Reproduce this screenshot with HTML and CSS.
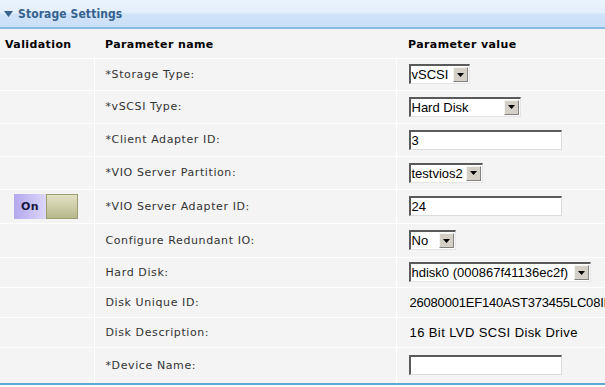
FILE: index.html
```html
<!DOCTYPE html>
<html>
<head>
<meta charset="utf-8">
<link rel="stylesheet" href="styles.css">
</head>
<body>
<div class="panel">
  <div class="panel-head">
    <svg class="caret" width="9" height="6" viewBox="0 0 9 6"><path d="M0 0H9L4.5 6Z" fill="#35628f"/></svg>
    <span class="title">Storage Settings</span>
  </div>
  <table class="grid">
    <thead>
      <tr class="hrow">
        <th class="c-val">Validation</th>
        <th class="c-name">Parameter name</th>
        <th class="c-value">Parameter value</th>
      </tr>
    </thead>
    <tbody>
      <tr class="r32"><td class="c-val"></td><td class="c-name">*Storage Type:</td>
        <td class="c-value"><div class="sel w61"><span class="sel-text">vSCSI</span><span class="sel-btn"><svg width="7" height="4" viewBox="0 0 7 4"><path d="M0 0H7L3.5 4Z" fill="#000"/></svg></span></div></td></tr>
      <tr class="r33"><td class="c-val"></td><td class="c-name">*vSCSI Type:</td>
        <td class="c-value"><div class="sel w112"><span class="sel-text">Hard Disk</span><span class="sel-btn"><svg width="7" height="4" viewBox="0 0 7 4"><path d="M0 0H7L3.5 4Z" fill="#000"/></svg></span></div></td></tr>
      <tr class="r33"><td class="c-val"></td><td class="c-name">*Client Adapter ID:</td>
        <td class="c-value"><div class="inp">3</div></td></tr>
      <tr class="r33"><td class="c-val"></td><td class="c-name">*VIO Server Partition:</td>
        <td class="c-value"><div class="sel w74"><span class="sel-text">testvios2</span><span class="sel-btn"><svg width="7" height="4" viewBox="0 0 7 4"><path d="M0 0H7L3.5 4Z" fill="#000"/></svg></span></div></td></tr>
      <tr class="r34"><td class="c-val"><div class="toggle"><span class="tg-on">On</span><span class="tg-knob"></span></div></td><td class="c-name">*VIO Server Adapter ID:</td>
        <td class="c-value"><div class="inp">24</div></td></tr>
      <tr class="r34"><td class="c-val"></td><td class="c-name">Configure Redundant IO:</td>
        <td class="c-value"><div class="sel w47"><span class="sel-text">No</span><span class="sel-btn"><svg width="7" height="4" viewBox="0 0 7 4"><path d="M0 0H7L3.5 4Z" fill="#000"/></svg></span></div></td></tr>
      <tr class="r30"><td class="c-val"></td><td class="c-name">Hard Disk:</td>
        <td class="c-value"><div class="sel w182"><span class="sel-text">hdisk0 (000867f41136ec2f)</span><span class="sel-btn"><svg width="7" height="4" viewBox="0 0 7 4"><path d="M0 0H7L3.5 4Z" fill="#000"/></svg></span></div></td></tr>
      <tr class="r30"><td class="c-val"></td><td class="c-name">Disk Unique ID:</td>
        <td class="c-value"><span class="plain uid">26080001EF140AST373455LC08II</span></td></tr>
      <tr class="r30"><td class="c-val"></td><td class="c-name">Disk Description:</td>
        <td class="c-value"><span class="plain">16 Bit LVD SCSI Disk Drive</span></td></tr>
      <tr class="r36"><td class="c-val"></td><td class="c-name">*Device Name:</td>
        <td class="c-value"><div class="inp"></div></td></tr>
    </tbody>
  </table>
</div>
</body>
</html>
```
FILE: styles.css
```css
html, body {
  margin: 0;
  padding: 0;
  background: #ffffff;
  overflow: hidden;
}
.panel {
  width: 605px;
  background: #f4f4f4;
}
.panel-head {
  height: 27px;
  display: flex;
  align-items: center;
  gap: 5px;
  padding-left: 4px;
  background: linear-gradient(#eaf3fd 0%, #e4effc 45%, #cfe2f8 55%, #cbe0f8 100%);
  border-bottom: 2px solid #85bbe0;
}
.caret { margin-top: 1px; }
.title {
  font-family: "DejaVu Sans Condensed", "DejaVu Sans", sans-serif;
  font-weight: bold;
  font-size: 12px;
  color: #35628f;
  letter-spacing: 0.1px;
}
.grid {
  width: 605px;
  border-collapse: collapse;
  table-layout: fixed;
  font-family: "DejaVu Sans", sans-serif;
  font-size: 11px;
  color: #333;
  border-bottom: 2px solid #5aaad4;
}
.grid th {
  font-weight: bold;
  color: #000;
  text-align: left;
  height: 29px;
  padding: 0;
  padding-top: 2px;
  box-sizing: border-box;
  vertical-align: middle;
  letter-spacing: 0.4px;
}
.grid td {
  padding: 0;
  border-top: 1px solid #ffffff;
  vertical-align: middle;
  letter-spacing: 0.6px;
}
.c-val { width: 94px; padding-left: 5px !important; box-sizing: border-box; }
.c-name { width: 302px; padding-left: 11px !important; box-sizing: border-box; border-left: 1px solid #fff; }
.c-value { padding-left: 12px !important; box-sizing: border-box; border-left: 1px solid #fff; white-space: nowrap; overflow: hidden; }
.grid th.c-name, .grid th.c-value { border-left: none; }
.r32 td { height: 32px; }
.r33 td { height: 33px; }
.r34 td { height: 34px; }
.r30 td { height: 30px; }
.r36 td { height: 37px; }
.sel {
  display: flex;
  align-items: stretch;
  height: 20px;
  box-sizing: border-box;
  background: #fff;
  border-top: 2px solid #5a5a5a;
  border-left: 2px solid #5a5a5a;
  border-bottom: 1px solid #e4e4e4;
  border-right: 1px solid #e4e4e4;
  font-family: "Liberation Sans", Arial, sans-serif;
  font-size: 13px;
  letter-spacing: 0;
  color: #000;
}
.sel-text { flex: 1; padding-left: 1px; line-height: 17px; white-space: nowrap; overflow: hidden; }
.sel-btn {
  width: 15px;
  margin: 1px;
  background: #d4d0c8;
  border-top: 1px solid #f4f4f0;
  border-left: 1px solid #f4f4f0;
  border-right: 1px solid #808080;
  border-bottom: 1px solid #808080;
  box-sizing: border-box;
  display: flex;
  align-items: center;
  justify-content: center;
}
.w61 { width: 61px; }
.w112 { width: 112px; }
.w74 { width: 74px; }
.w47 { width: 47px; }
.w182 { width: 182px; }
.inp {
  width: 153px;
  height: 20px;
  box-sizing: border-box;
  background: #fff;
  border-top: 2px solid #5a5a5a;
  border-left: 2px solid #5a5a5a;
  border-bottom: 1px solid #dcdcdc;
  border-right: 1px solid #dcdcdc;
  font-family: "Liberation Sans", Arial, sans-serif;
  font-size: 13px;
  letter-spacing: 0;
  line-height: 17px;
  padding-left: 1px;
  color: #000;
}
.plain {
  font-family: "Liberation Sans", Arial, sans-serif;
  font-size: 13px;
  letter-spacing: 0.4px;
  color: #000;
  padding-left: 1px;
}
.plain.uid { letter-spacing: -0.2px; }
.toggle {
  display: flex;
  margin-left: 9px;
  height: 25px;
  width: 64px;
}
.tg-on {
  width: 32px;
  display: flex;
  align-items: center;
  justify-content: center;
  background: linear-gradient(90deg, #b4a8ee, #dcd6fa);
  font-weight: bold;
  font-size: 11px;
  color: #1a1a40;
  letter-spacing: 0.3px;
}
.tg-knob {
  width: 32px;
  box-sizing: border-box;
  border: 1px solid #9e9e6e;
  background: linear-gradient(#e2e2c4, #b8b88c);
}
```
